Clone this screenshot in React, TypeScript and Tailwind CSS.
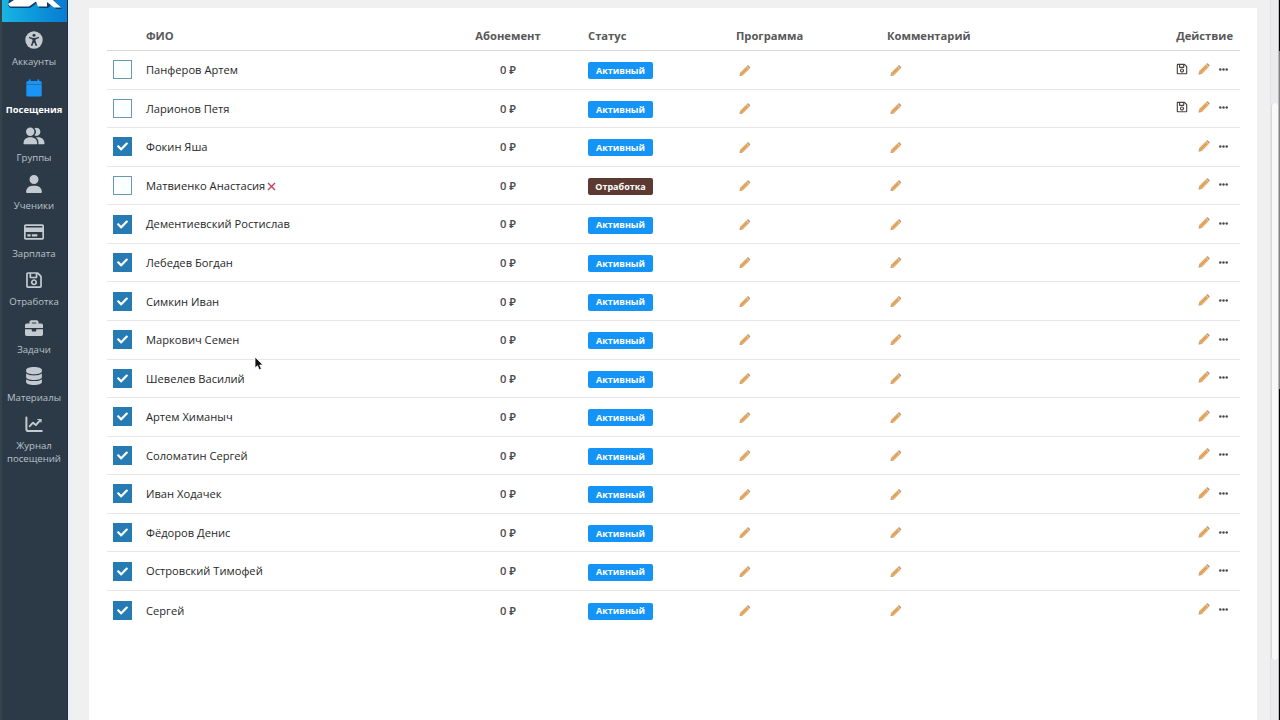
import React from "react";
import { FaRegCreditCard, FaRegSave, FaBriefcase, FaCheck } from "react-icons/fa";
import { FaUser, FaDatabase } from "react-icons/fa6";

type IconProps = { className?: string };

function AccessIcon({ className }: IconProps) {
  return (
    <svg viewBox="0 0 18 18" className={className}>
      <circle cx="9" cy="9" r="8.7" fill="currentColor" />
      <g stroke="#2c3a47" strokeLinecap="round" strokeLinejoin="round" fill="none">
        <circle cx="9" cy="4.3" r="1.5" fill="#2c3a47" stroke="none" />
        <path d="M4.7 6.6L7.7 7.7H10.3L13.3 6.6" strokeWidth="1.5" />
        <path d="M9 8.2V10.2" strokeWidth="3" />
        <path d="M8.2 10.5L6.8 14.1M9.8 10.5L11.2 14.1" strokeWidth="1.6" />
      </g>
    </svg>
  );
}

function CalendarIcon({ className }: IconProps) {
  return (
    <svg viewBox="0 0 16 18" className={className} fill="currentColor">
      <path d="M2.8 1.1a.9.9 0 0 1 1.8 0V2h6.800V1.100a.9.9 0 0 1 1.800 0V2h.9A1.600 1.600 0 0 1 15.700 3.600V5.200H.3V3.600A1.600 1.600 0 0 1 1.900 2H2.800Z" />
      <path d="M.3 5.600H15.700V15.900A1.600 1.600 0 0 1 14.100 17.500H1.900A1.600 1.600 0 0 1 .3 15.900Z" />
    </svg>
  );
}

function GroupIcon({ className }: IconProps) {
  return (
    <svg viewBox="0 0 22 18" className={className} fill="currentColor">
      <circle cx="7.200" cy="4.700" r="4.200" />
      <path d="M.5 16.600C.5 12.300 3.100 10.200 7.300 10.200S14.200 12.300 14.200 16.600Q14.200 17.200 13.500 17.200H1.200Q.5 17.200 .5 16.600Z" />
      <path d="M11.500 1.200A4 4 0 1 1 11.500 8.200A5.300 5.300 0 0 0 11.500 1.200Z" />
      <path d="M13 10.400C18.500 9.500 21.500 12.300 21.500 16.500Q21.500 17.200 20.800 17.200H15.300C15.900 14.300 15 11.700 13 10.400Z" />
    </svg>
  );
}

function ChartIcon({ className }: IconProps) {
  return (
    <svg viewBox="0 0 18 18" className={className} fill="none" stroke="currentColor" strokeLinecap="round" strokeLinejoin="round">
      <path d="M1.400 2.500V14.300Q1.400 16.100 3.200 16.100H16.800" strokeWidth="2" />
      <path d="M4.800 11.200L8 7.700L10.800 10L15.400 5.200" strokeWidth="1.900" />
      <path d="M12.800 4.500H16V7" strokeWidth="1.200" />
    </svg>
  );
}

function PencilIcon({ className }: IconProps) {
  return (
    <svg viewBox="0 0 12 12" className={className}>
      <path d="M1.100 8L7.900 1.200L10.800 4.100L4 10.900L.7 11.400Z" fill="#e9ae68" />
      <path d="M2.700 9.100L8.300 3.600" stroke="#c4935f" strokeWidth=".9" />
      <path d="M8.200 1L8.800.5Q9.400 0 10 .6L11.400 2Q12 2.600 11.400 3.200L10.900 3.800Z" fill="#b59579" />
      <path d="M1.100 8.800L.6 11.500L3.300 11Z" fill="#c4a181" />
    </svg>
  );
}

function DotsIcon({ className }: IconProps) {
  return (
    <svg viewBox="0 0 9 3" className={className} fill="#48484a">
      <circle cx="1.300" cy="1.500" r="1.200" />
      <circle cx="4.500" cy="1.500" r="1.200" />
      <circle cx="7.700" cy="1.500" r="1.200" />
    </svg>
  );
}

const menu: { label: string; icon: React.ComponentType<IconProps>; size: string; active?: boolean }[] = [
  { label: "Аккаунты", icon: AccessIcon, size: "h-[18px] w-[18px]" },
  { label: "Посещения", icon: CalendarIcon, size: "h-[18px] w-4", active: true },
  { label: "Группы", icon: GroupIcon, size: "h-[18px] w-[22px]" },
  { label: "Ученики", icon: FaUser, size: "h-[18px] w-[18px]" },
  { label: "Зарплата", icon: FaRegCreditCard, size: "h-[18px] w-5" },
  { label: "Отработка", icon: FaRegSave, size: "h-[18px] w-[18px]" },
  { label: "Задачи", icon: FaBriefcase, size: "h-[18px] w-[18px]" },
  { label: "Материалы", icon: FaDatabase, size: "h-[18px] w-[18px]" },
  { label: "Журнал посещений", icon: ChartIcon, size: "h-[18px] w-[18px]" },
];

type Student = { name: string; checked: boolean; makeup?: boolean; save?: boolean };

const students: Student[] = [
  { name: "Панферов Артем", checked: false, save: true },
  { name: "Ларионов Петя", checked: false, save: true },
  { name: "Фокин Яша", checked: true },
  { name: "Матвиенко Анастасия", checked: false, makeup: true },
  { name: "Дементиевский Ростислав", checked: true },
  { name: "Лебедев Богдан", checked: true },
  { name: "Симкин Иван", checked: true },
  { name: "Маркович Семен", checked: true },
  { name: "Шевелев Василий", checked: true },
  { name: "Артем Химаныч", checked: true },
  { name: "Соломатин Сергей", checked: true },
  { name: "Иван Ходачек", checked: true },
  { name: "Фёдоров Денис", checked: true },
  { name: "Островский Тимофей", checked: true },
  { name: "Сергей", checked: true },
];

const columns = "grid grid-cols-[39px_323px_78px_41px_148px_151px_1fr] items-center";

function Sidebar() {
  return (
    <aside className="flex w-[68px] shrink-0 flex-col border-l-2 border-r border-l-[#35434b] border-r-[#233240] bg-[#2c3a47]">
      <div className="h-[22px] shrink-0 bg-linear-to-r from-[#19b5e3] to-[#0a7bd2]">
        <svg width="65" height="22" viewBox="0 0 65 22">
          <path d="M6 5L8 8H28L35 3L37 8H46L50 4L54 9H60L52 0H7Z" fill="#0b3f6e" />
          <path d="M12 0L6 4L8 6.500H27L34 1.500L36 6.500H45V2L52 7.500H59L51 0Z" fill="#fff" />
        </svg>
      </div>
      <nav className="flex flex-col pt-[9px] pr-px">
        {menu.map(({ label, icon: Icon, size, active }) => (
          <a key={label} className={active ? "flex min-h-12 flex-col items-center text-center text-[#1b95f5]" : "flex min-h-12 flex-col items-center text-center text-[#c3cbd1]"}>
            <Icon className={`${size} shrink-0`} />
            <span className={active ? "mt-1.5 text-[9.4px] leading-[13px] font-bold text-white" : "mt-1.5 text-[9.6px] leading-[13px] text-[#b9c2c9]"}>{label}</span>
          </a>
        ))}
      </nav>
    </aside>
  );
}

function Checkbox({ checked }: { checked: boolean }) {
  return (
    <span className={checked ? "ml-1.5 flex size-[19px] items-center justify-center bg-[#267cb2]" : "ml-1.5 flex size-[19px] border border-[#6b98b1] bg-[#fbffff]"}>
      {checked && <FaCheck className="size-[11px] text-white" />}
    </span>
  );
}

function Row({ student }: { student: Student }) {
  return (
    <div className={`${columns} h-[38.57px] border-b border-[#e7e7e8] last:border-b-0`}>
      <Checkbox checked={student.checked} />
      <div className="flex items-center pt-[1.5px] text-[11.15px] text-[#272729]">
        {student.name}
        {student.makeup && (
          <svg className="ml-0.5 size-[9px]" viewBox="0 0 9 9">
            <path d="M1 1L8 8M8 1L1 8" stroke="#c5405a" strokeWidth="1.400" />
          </svg>
        )}
      </div>
      <div className="pt-[1.5px] text-center text-[11.2px] font-semibold text-[#4c4c4e]">0 ₽</div>
      <span />
      <span className={student.makeup ? "mt-0.5 flex h-[17px] w-[65px] items-center justify-center rounded-xs bg-[#5c3a31] text-[9px] font-bold text-white" : "mt-0.5 flex h-[17px] w-[65px] items-center justify-center rounded-xs bg-[#1494f6] text-[9px] font-bold text-white"}>
        {student.makeup ? "Отработка" : "Активный"}
      </span>
      <PencilIcon className="mt-px ml-[3px] size-[11.5px]" />
      <div className="flex items-center">
        <PencilIcon className="mt-px ml-[3px] size-[11.5px]" />
        <div className="ml-auto flex items-center pr-3 pb-0.5">
          {student.save && <FaRegSave className="mr-[10px] size-[12px] text-[#48423f]" />}
          <PencilIcon className="size-3" />
          <DotsIcon className="mt-px ml-[9px] h-[3px] w-[9px]" />
        </div>
      </div>
    </div>
  );
}

export default function App() {
  return (
    <div className="relative flex h-[720px] w-[1280px] overflow-hidden bg-[#f0f0f1] font-['Open_Sans','Noto_Sans',sans-serif]">
      <Sidebar />
      <div className="w-[5px] shrink-0 bg-[#e9f0f7]" />
      <main className="flex flex-1 pt-2 pr-[13px] pl-4">
        <section className="flex-1 bg-white pr-[17px] pl-[18px]">
          <div className={`${columns} h-[43px] border-b border-[#d9d9da] pt-3.5 text-[11.2px] font-bold text-[#58585a]`}>
            <span />
            <span>ФИО</span>
            <span className="text-center">Абонемент</span>
            <span />
            <span>Статус</span>
            <span>Программа</span>
            <span className="flex justify-between pr-[7px]"><span>Комментарий</span><span>Действие</span></span>
          </div>
          <div>
            {students.map((s) => <Row key={s.name} student={s} />)}
          </div>
        </section>
      </main>
      <div className="flex w-2 shrink-0 flex-col border-l border-[#e2e2e4] bg-[#ebebed] pt-[103px]">
        <div className="h-[557px] rounded-full border-l border-[#dadadc] bg-[#f9f9fa]" />
      </div>
      <div className="flex w-0.5 shrink-0 flex-col border-l border-[#bcbcbe] bg-black">
        <div className="mt-[51px] h-[338px] bg-[#828284]" />
      </div>
      <svg className="absolute top-[356px] left-[254px]" width="10" height="15" viewBox="0 0 10 15">
        <path d="M1 1V12L3.500 9.800L5.200 13.800L7.400 12.800L5.700 9H9Z" fill="#111" stroke="#fff" strokeWidth="0.800" />
      </svg>
    </div>
  );
}
